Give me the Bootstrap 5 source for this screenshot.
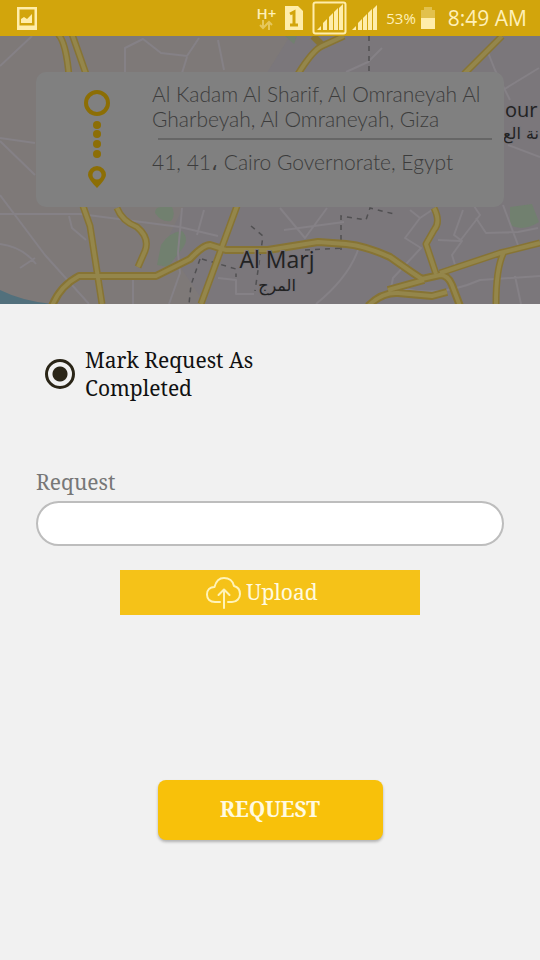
<!DOCTYPE html>
<html lang="en">
<head>
<meta charset="utf-8">
<meta name="viewport" content="width=device-width, initial-scale=1">
<title>Request</title>
<link href="https://cdn.jsdelivr.net/npm/bootstrap@5.3.0/dist/css/bootstrap.min.css" rel="stylesheet">
<style>
  body { background: #f1f1f1; color: #111; font-family: "Noto Serif", "Droid Serif", "DejaVu Serif Condensed", "DejaVu Serif", serif; font-size: 21px; line-height: 28px; }
  .status-bar { background: #d2a50c; color: #fff0b8; height: 36px; padding: 0 13px 0 16px; font-family: "Open Sans", sans-serif; }
  .status-bar svg { flex: none; }
  .net { font-size: 15px; line-height: 14px; font-weight: 600; }
  .percent { font-size: 15px; }
  .clock { font-size: 21px; margin-left: 12px; }
  .map-area { padding: 36px; height: 268px; background: #7d797b; }
  .trip { background: #808080; border-radius: 10px; min-height: 135px; padding: 9px 12px 0 0; color: #3c3c3c; font-family: Lato, sans-serif; font-weight: 300; font-size: 21px; line-height: 25px; }
  .trip-marks { width: 116px; padding: 8px 0 0 46px; }
  .trip-rule { height: 2px; background: #666; margin: 7px 0 9px 6px; }
  .request-form { padding: 42px 36px; }
  .done { gap: 10px; padding-left: 9px; }
  .done-radio { width: 30px; height: 30px; margin: 0; border: 3px solid #2a2517; background-color: transparent; }
  .done-radio:checked { border-color: #2a2517; background: radial-gradient(circle, #2a2517 7px, transparent 8px); }
  .done-label { max-width: 180px; }
  .field { margin-top: 66px; }
  .field label { color: #777; }
  .field input { height: 45px; border: 2px solid #bdbdbd; margin-top: 5px; }
  .upload { width: 300px; height: 45px; margin-top: 24px; padding: 0 16px 0 0; color: #fffae0; background: #f5c218; font-size: 21px; }
  .send { width: 225px; height: 60px; margin-top: 165px; border-radius: 8px; color: #fffae0; background: #f8c10a; font-size: 21px; box-shadow: 0 2px 3px #0004; }
  .upload:hover, .send:hover { background: #e5b310; color: #fff; }
</style>
<script src="https://cdn.jsdelivr.net/npm/bootstrap@5.3.0/dist/js/bootstrap.bundle.min.js" defer></script>
</head>
<body>
<header class="status-bar d-flex align-items-center">
  <svg class="me-auto" width="22" height="24" viewBox="0 0 22 24" aria-hidden="true"><path fill="#ffedaa" fill-rule="evenodd" d="M1 1h20v23H1zM3.500 3.500v16h15v-16zM5 17v-4l3-2 3 2 5-5v9z"/></svg>
  <div class="net d-flex flex-column align-items-center me-2">
    <span>H+</span>
    <svg width="14" height="10" viewBox="0 0 14 10" fill="none" stroke="#e6c75b" stroke-width="2" aria-hidden="true"><path d="M4 0v8M1 5l3 3 3-3M10 10V2M7 5l3-3 3 3"/></svg>
  </div>
  <svg class="me-2" width="20" height="26" viewBox="0 0 20 26" aria-hidden="true"><path fill="#ffedaa" d="M1 1h13l5 5v19H1z"/><path d="M6 9l4-2v13M6 20h8" fill="none" stroke="#d2a50c" stroke-width="3"/></svg>
  <svg class="me-1" width="35" height="34" viewBox="0 0 35 34" aria-hidden="true"><rect x="1.500" y="1.500" width="32" height="31" rx="2" fill="none" stroke="#ffedaa" stroke-width="2"/><path fill="#ffedaa" d="M5 29l4-4v4zM11 29v-7l4-4v11zM17 29V16l4-4v17zM22 29V11l4-4v22zM27 29V7l4-4v26z"/></svg>
  <svg class="me-2" width="27" height="28" viewBox="0 0 27 28" aria-hidden="true"><path fill="#ffedaa" d="M1 26l4-4v4zM7 26v-7l4-4v11zM12 26V14l4-4v16zM17 26V9l4-4v21zM22 26V5l4-4v25z"/></svg>
  <span class="percent me-1">53%</span>
  <svg width="16" height="24" viewBox="0 0 16 24" aria-hidden="true"><path fill="#e2c14d" d="M4 1h8v3h3v8H1V4h3z"/><path fill="#ffedaa" d="M1 12h14v11H1z"/></svg>
  <span class="clock">8:49 AM</span>
</header>

<section class="map-area position-relative overflow-hidden">
  <svg class="position-absolute top-0 start-0 w-100 h-100" viewBox="0 36 540 268" preserveAspectRatio="xMidYMin slice" role="img" aria-label="Map around Al Marj">
    <path fill="#7e7978" d="M0 36h540v268H0z"/>
    <path fill="#7b777b" d="M290 36h250v268H205l-40-60 20-40z"/>
    <path fill="#52707c" d="M0 290q22 11 52 14H0z"/>
    <g fill="#71806f"><path d="M155 213q0-7 8-6h9q4 8-1 14-9 2-16-8zM157 265l4-20q8-13 21-14 8 8 0 18l-14 18zM510 207l22-3 7 18q-16 10-29 3zM285 36h12l-3 8z"/></g>
    <g fill="none" stroke="#858186" stroke-width="2" stroke-linejoin="round">
      <path d="M0 66L32 36M125 72V48l18-9 18 14 26 3 12-18M187 57l-5 16M218 40l6 30M0 138l35 5M0 141l35 34M0 195l45 60 44 49M0 214h80l100 13 38 9M69 216l3 12 14 12M0 244q23 3 36 20M20 268l15-10M182 208l-4 45 2 20-11 31M204 210l-7 25M133 273v31M218 278l18 2v14h18"/>
      <path d="M280 208l25 30 22-30M284 230l60-8M358 250q-10 28-42 54M410 210l10 8-15 20 16 10-28 30-2 10M420 218l12-8M438 240l22 1 20-26-8-12M463 210l-9 25 8 6-10 14 4 13M476 218l10 15 32-1 20-4M503 205l15 40M400 288q40 10 80-8l60-4M515 276l6 28M346 72l22-10 14-14M510 100l-15-30-8-20M503 90l36-22M508 145l32 12"/>
    </g>
    <g fill="none" stroke="#515052" stroke-width="1.500" stroke-dasharray="5 5">
      <path d="M369 36v36M200 259l-9 26-2 19M202 259l34 10v8M251 226l12 10-8 55M341 250v-34l25 4 4-12 24 6M305 250l38-2"/>
    </g>
    <g fill="none" stroke-linejoin="round">
      <g stroke="#877434">
        <path stroke-width="7" d="M58 34q8 8 11 42M72 34l14 40M298 74q15-24 24-28l22-10M313 36l9 9M464 74l38-38M83 206l7 20 12 78M117 208q5 13 20 19 13 11 8 24l-7 16M237 206l-36 98M434 208q7 14 0 22l-8 14 10 30M540 243l-40 10-60 20M504 252q-8 15-8 52"/>
        <path stroke-width="8" d="M52 306q8-20 27-30h77l34-17q13-14 20-14l16 5h42l50-8 28 2q20 2 44 13 24 17 32 22l18-4q8 0 12 10l8 21M388 290l36-10M368 306q14-14 30-13l34 3 15-4"/>
      </g>
      <g stroke="#94864b">
        <path stroke-width="4" d="M58 34q8 8 11 42M72 34l14 40M298 74q15-24 24-28l22-10M464 74l38-38M83 206l7 20 12 78M117 208q5 13 20 19 13 11 8 24l-7 16M237 206l-36 98M434 208q7 14 0 22l-8 14 10 30M540 243l-40 10-60 20M504 252q-8 15-8 52"/>
        <path stroke-width="4" d="M52 306q8-20 27-30h77l34-17q13-14 20-14l16 5h42l50-8 28 2q20 2 44 13 24 17 32 22l18-4q8 0 12 10l8 21M388 290l36-10M368 306q14-14 30-13l34 3 15-4"/>
      </g>
    </g>
    <g fill="#222" stroke="#77747a" stroke-width="2" paint-order="stroke" font-family="'Open Sans', 'DejaVu Sans', sans-serif">
      <text x="277" y="268" font-size="23" text-anchor="middle">Al Marj</text>
      <text x="277" y="291" font-size="16" text-anchor="middle" font-family="'DejaVu Sans', sans-serif">المرج</text>
      <text x="505" y="117" font-size="20">our</text>
      <text x="503" y="139" font-size="16" font-family="'DejaVu Sans', sans-serif">نة الع</text>
    </g>
  </svg>

  <div class="trip card border-0 position-relative flex-row">
    <div class="trip-marks flex-shrink-0">
      <svg width="30" height="104" viewBox="0 0 30 104" aria-hidden="true">
        <circle cx="15" cy="14" r="11" fill="none" stroke="#8c6e05" stroke-width="4"/>
        <g fill="#8c6e05"><circle cx="15" cy="36" r="4"/><circle cx="15" cy="45" r="4"/><circle cx="15" cy="55" r="4"/><circle cx="15" cy="65" r="4"/>
        <path fill-rule="evenodd" d="M15 77a9 9 0 0 1 9 9q0 4-9 13q-9-9-9-13a9 9 0 0 1 9-9zm0 4.500a4.500 4.500 0 1 0 0 9a4.500 4.500 0 1 0 0-9z"/></g>
      </svg>
    </div>
    <div class="flex-grow-1">
      <div>Al Kadam Al Sharif, Al Omraneyah Al Gharbeyah, Al Omraneyah, Giza</div>
      <div class="trip-rule"></div>
      <div>41, 41، Cairo Governorate, Egypt</div>
    </div>
  </div>
</section>

<main>
  <form class="request-form d-flex flex-column">
    <div class="done d-flex align-items-center">
      <input class="form-check-input done-radio flex-shrink-0" type="radio" id="done" name="status" checked>
      <label class="done-label" for="done">Mark Request As Completed</label>
    </div>
    <div class="field">
      <label class="d-block" for="request">Request</label>
      <input class="form-control rounded-pill" type="text" id="request">
    </div>
    <button class="upload btn border-0 rounded-0 align-self-center d-flex align-items-center justify-content-center gap-1" type="button">
      <svg width="36" height="34" viewBox="0 0 36 34" fill="none" stroke="#fff3b8" stroke-width="2" stroke-linecap="round" stroke-linejoin="round" aria-hidden="true"><path d="M14 26H9C4 26 1 23 1 18.500S4 11 8.500 11C10 5 13 2 18 2s9 3 10 8c4 1 6 4 6 8s-3 8-8 8h-4"/><path d="M18 32V14M12.500 19l5.500-5.500 5.500 5.500"/></svg>
      <span>Upload</span>
    </button>
    <button class="send btn border-0 align-self-center fw-bold" type="submit">REQUEST</button>
  </form>
</main>
</body>
</html>
